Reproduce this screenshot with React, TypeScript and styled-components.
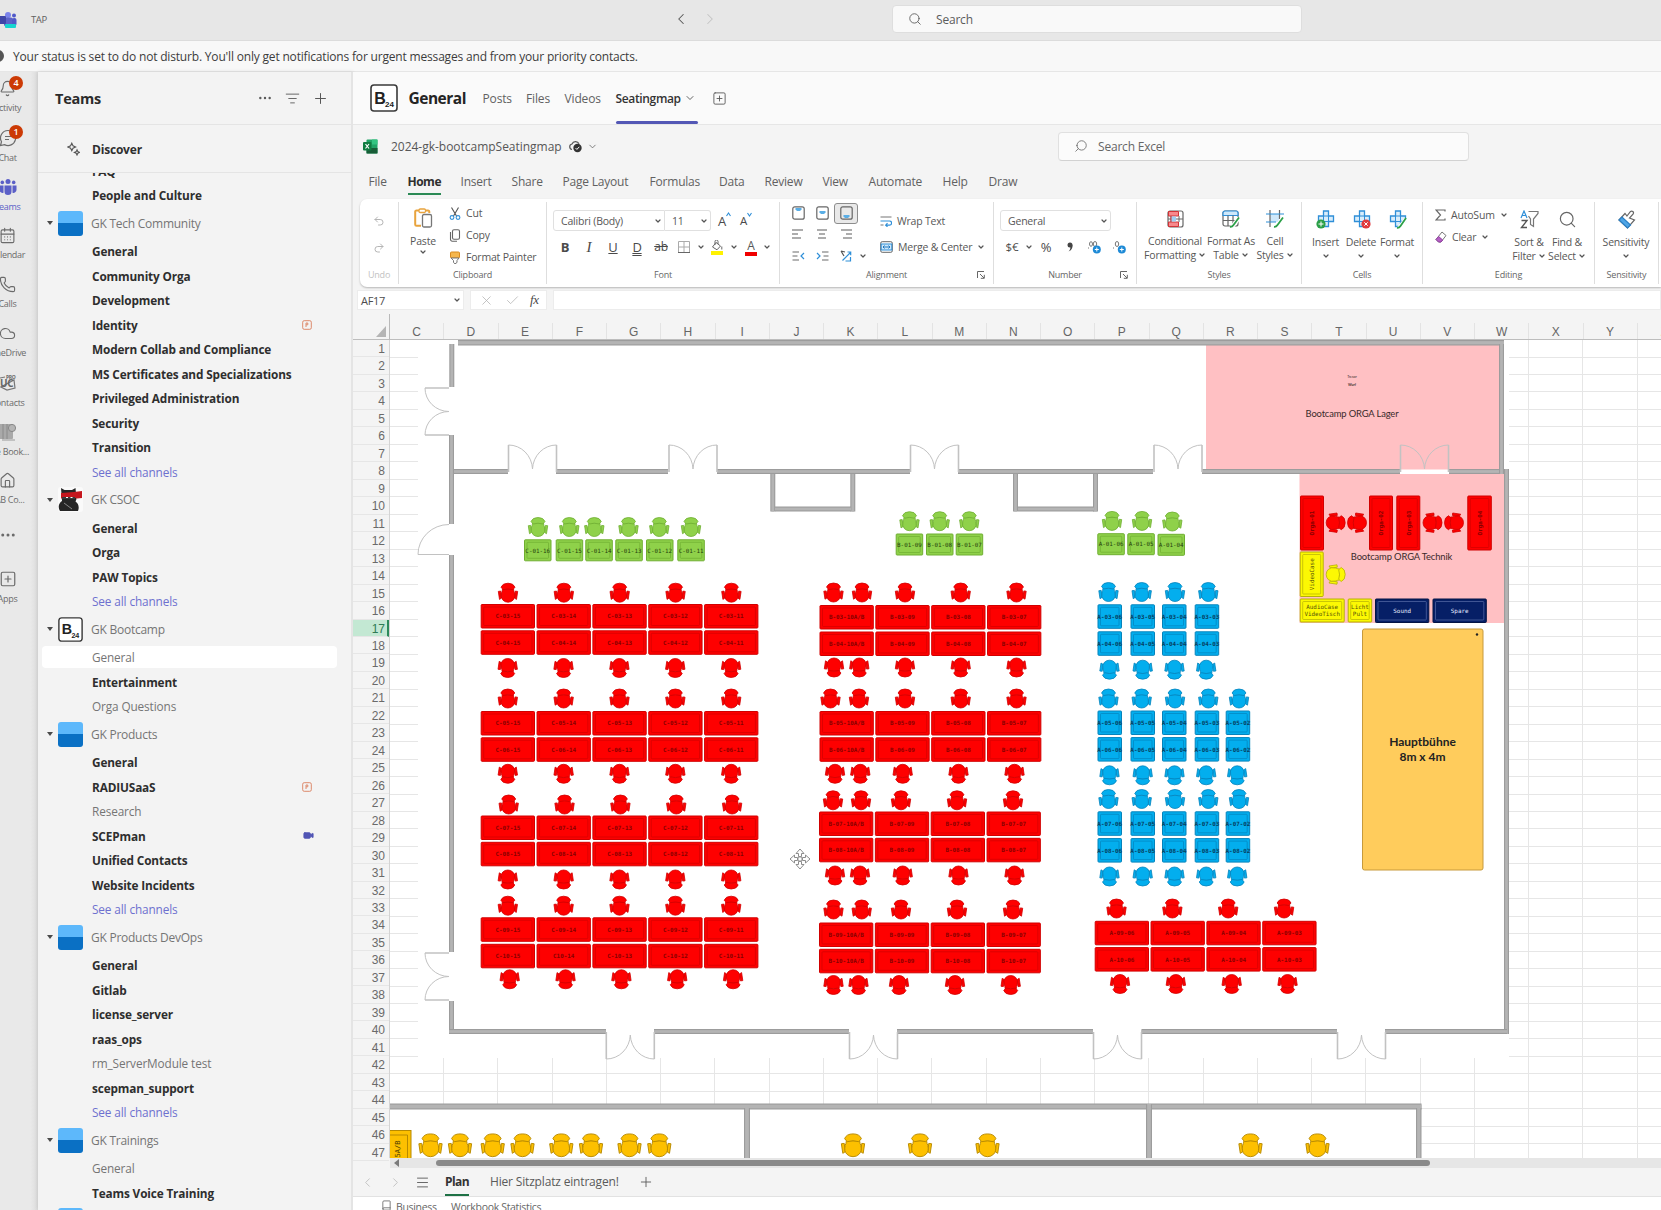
import React from "react";
import styled, { createGlobalStyle, css } from "styled-components";
import {
  Bell,
  CalendarDays,
  Phone,
  Cloud,
  House,
  SquarePlus,
  Search,
  Plus,
  ListFilter,
  Ellipsis,
  Undo2,
  Redo2,
  ChevronLeft,
  ChevronRight,
  ChevronDown,
  Check,
  X,
  Menu,
  Book,
  Video,
} from "lucide-react";

const GlobalStyle = createGlobalStyle`
  * { box-sizing: border-box; }
  html, body { margin: 0; padding: 0; }
  body {
    width: 1661px;
    height: 1210px;
    overflow: hidden;
    background: #f4f4f4;
    font-family: "Open Sans", "Noto Sans", sans-serif;
    color: #424242;
  }
  svg { display: block; flex: none; }
`;

/* ---------- shell ---------- */

const Shell = styled.div`
  width: 1661px;
  height: 1210px;
  display: flex;
  flex-direction: column;
  overflow: hidden;
  white-space: nowrap;
`;

const TitleBar = styled.header`
  flex: none;
  height: 41px;
  display: flex;
  align-items: center;
  background: #e7e7e7;
  border-bottom: 1px solid #dcdcdc;
  padding-bottom: 2px;
`;

const LogoSlot = styled.div`
  width: 31px;
  padding-top: 1px;
`;

const Tap = styled.div`
  width: 638px;
  font-size: 9.5px;
  letter-spacing: -0.4px;
  color: #616161;
`;

const NavButtons = styled.div`
  display: flex;
  gap: 11px;
  width: 223px;
  padding-left: 3px;
`;

const GlobalSearch = styled.div`
  width: 410px;
  height: 28px;
  border-radius: 4px;
  background: #f9f9f9;
  border: 1px solid #dedede;
  display: flex;
  align-items: center;
  gap: 14px;
  padding-left: 15px;
  font-size: 12px;
  letter-spacing: -0.2px;
  color: #5c5c5c;
`;

const Banner = styled.div`
  flex: none;
  height: 31px;
  display: flex;
  align-items: center;
  background: #f8f8f8;
  border-bottom: 1px solid #e6e6e6;
  font-size: 12px;
  letter-spacing: -0.18px;
  color: #3c3c3c;
`;

const BannerDot = styled.div`
  width: 12px;
  height: 12px;
  border-radius: 50%;
  background: #555;
  margin: 0 9px 0 -8px;
`;

const Body = styled.div`
  flex: 1;
  min-height: 0;
  display: flex;
`;

/* ---------- rail ---------- */

const Rail = styled.nav`
  flex: none;
  width: 38px;
  overflow: hidden;
  background: linear-gradient(90deg, #e9e9e9 80%, #dcdcdc);
`;

const RailItem = styled.div<{ $active?: boolean; $bare?: boolean }>`
  position: relative;
  width: 60px;
  margin-left: -22.5px;
  height: 49px;
  padding-top: ${(p) => (p.$bare ? 13 : 8)}px;
  display: flex;
  flex-direction: column;
  align-items: center;
  gap: 4px;
  font-size: 9px;
  line-height: 13px;
  letter-spacing: -0.3px;
  color: ${(p) => (p.$active ? "#5b5fc7" : "#6b6b6b")};
`;

const Badge = styled.span`
  position: absolute;
  left: 31.5px;
  top: 4px;
  width: 14px;
  height: 14px;
  border-radius: 50%;
  background: #cc3a05;
  color: #fff;
  font-size: 9px;
  font-weight: 600;
  line-height: 14px;
  text-align: center;
`;

/* ---------- sidebar ---------- */

const Sidebar = styled.aside`
  flex: none;
  width: 315px;
  display: flex;
  flex-direction: column;
  background: #f3f3f3;
  border-right: 2px solid #e4e4e4;
  box-shadow: 0 0 4px rgba(0, 0, 0, 0.12);
`;

const SideHeader = styled.div`
  flex: none;
  height: 53px;
  display: flex;
  align-items: center;
  padding: 0 22px 0 17px;
  border-bottom: 1px solid #e4e4e4;
  color: #555;
  gap: 12px;
`;

const SideTitle = styled.h1`
  margin: 0;
  flex: 1;
  font-size: 14.5px;
  font-weight: 700;
  letter-spacing: -0.25px;
  color: #2b2b2b;
`;

const Discover = styled.div`
  flex: none;
  height: 48px;
  display: flex;
  align-items: center;
  gap: 12px;
  padding: 1px 0 0 29px;
  border-bottom: 1px solid #e4e4e4;
  font-size: 12px;
  font-weight: 700;
  letter-spacing: -0.2px;
  color: #2f2f2f;
`;

const TeamList = styled.div`
  flex: 1;
  min-height: 0;
  overflow: hidden;
`;

const TeamListInner = styled.div`
  margin-top: -14.6px;
`;

const TeamRow = styled.div`
  height: 31.5px;
  display: flex;
  align-items: center;
  padding-left: 9px;
  font-size: 12px;
  letter-spacing: -0.25px;
  color: #757575;
`;

const Caret = styled.i`
  width: 0;
  height: 0;
  border: 3px solid transparent;
  border-top: 4px solid #4a4a4a;
  border-bottom: 0;
  margin-right: 5px;
`;

const Avatar = styled.div<{ $kind: "blue" | "cat" | "b24" }>`
  width: 25px;
  height: 25px;
  border-radius: 3px;
  margin-right: 8px;
  overflow: hidden;
  ${(p) =>
    p.$kind === "blue" &&
    css`
      background: linear-gradient(#5db8fb 48%, #0a70c4 50%);
    `}
`;

const ChannelRow = styled.div<{ $tone: "bold" | "plain" | "link"; $selected?: boolean }>`
  height: ${(p) => (p.$selected ? "22.5px" : "24.5px")};
  margin: ${(p) => (p.$selected ? "1px 14px 1px 4px" : "0 14px 0 4px")};
  border-radius: 4px;
  background: ${(p) => (p.$selected ? "#fff" : "transparent")};
  display: flex;
  align-items: center;
  justify-content: space-between;
  padding: 0 25px 0 50px;
  font-size: 11.8px;
  font-weight: ${(p) => (p.$tone === "bold" ? 700 : 400)};
  letter-spacing: ${(p) => (p.$tone === "bold" ? "-0.14px" : "-0.12px")};
  color: ${(p) => (p.$tone === "bold" ? "#2e2e2e" : p.$tone === "link" ? "#6d70cf" : "#757575")};
`;

/* ---------- channel header ---------- */

const Main = styled.main`
  flex: 1;
  min-width: 0;
  display: flex;
  flex-direction: column;
  background: #f4f4f4;
`;

const ChannelHeader = styled.div`
  flex: none;
  height: 53px;
  display: flex;
  align-items: center;
  padding-left: 16.5px;
  background: #fafafa;
  border-bottom: 1px solid #e6e6e6;
`;

const ChannelTitle = styled.h2`
  margin: 0;
  width: 75px;
  padding-left: 11px;
  margin-right: 10px;
  font-size: 15.5px;
  font-weight: 700;
  letter-spacing: -0.5px;
  color: #242424;
`;

const HeaderTab = styled.div<{ $w: number; $active?: boolean }>`
  position: relative;
  width: ${(p) => p.$w}px;
  height: 52px;
  display: flex;
  align-items: center;
  gap: 3px;
  font-size: 12px;
  font-weight: ${(p) => (p.$active ? 600 : 400)};
  letter-spacing: ${(p) => (p.$active ? "-0.35px" : "-0.15px")};
  color: ${(p) => (p.$active ? "#333" : "#616161")};
  ${(p) =>
    p.$active &&
    css`
      &::after {
        content: "";
        position: absolute;
        left: 0;
        width: 82px;
        bottom: 0;
        height: 3px;
        border-radius: 2px;
        background: #5357b5;
      }
    `}
`;

/* ---------- workbook chrome ---------- */

const FileRow = styled.div`
  flex: none;
  height: 42px;
  display: flex;
  align-items: center;
  padding-left: 10px;
  color: #565656;
`;

const FileName = styled.div`
  width: 169px;
  margin: 0 8px 0 13px;
  font-size: 12px;
  letter-spacing: -0.02px;
`;

const ExcelSearch = styled.div`
  width: 411px;
  height: 29px;
  margin-left: 460px;
  border-radius: 4px;
  background: #fbfbfb;
  border: 1px solid #e0e0e0;
  border-bottom-color: #d2d2d2;
  display: flex;
  align-items: center;
  gap: 10px;
  padding-left: 15px;
  font-size: 12px;
  letter-spacing: -0.2px;
  color: #666;
`;

const MenuTabs = styled.div`
  flex: none;
  height: 32px;
  padding: 3px 0 0 15.5px;
  display: flex;
`;

const MenuTab = styled.div<{ $w: number; $active?: boolean }>`
  width: ${(p) => p.$w}px;
  font-size: 12px;
  line-height: 24px;
  font-weight: ${(p) => (p.$active ? 700 : 400)};
  letter-spacing: ${(p) => (p.$active ? "-0.5px" : "-0.2px")};
  color: ${(p) => (p.$active ? "#2f2f2f" : "#616161")};
  span {
    display: inline-block;
    height: 25px;
    border-bottom: ${(p) => (p.$active ? "2px solid #2b8a55" : "none")};
  }
`;

const Ribbon = styled.section`
  flex: none;
  height: 88px;
  margin-left: 7px;
  background: #fff;
  border-radius: 7px 0 0 7px;
  box-shadow: 0 1px 2px rgba(0, 0, 0, 0.25);
  display: flex;
  padding: 3px 0;
`;

const Group = styled.div<{ $w: number }>`
  flex: none;
  width: ${(p) => p.$w}px;
  display: grid;
  grid-template-rows: 66px 14px;
  border-right: 1px solid #dedede;
  font-size: 10.5px;
  letter-spacing: -0.2px;
  color: #575757;
`;

const GroupBody = styled.div<{ $pad?: string; $gap?: number }>`
  display: flex;
  gap: ${(p) => p.$gap ?? 0}px;
  padding: ${(p) => p.$pad ?? "0"};
`;

const GroupLabel = styled.div<{ $dim?: boolean; $side?: number }>`
  display: grid;
  grid-template-columns: ${(p) => p.$side ?? 16}px 1fr ${(p) => p.$side ?? 16}px;
  align-items: center;
  text-align: center;
  font-size: 9px;
  line-height: 14px;
  color: ${(p) => (p.$dim ? "#c2c2c2" : "#666")};
`;

const Stack = styled.div<{ $w?: number; $gap?: number; $pad?: string; $center?: boolean }>`
  flex: none;
  width: ${(p) => (p.$w ? `${p.$w}px` : "auto")};
  display: flex;
  flex-direction: column;
  gap: ${(p) => p.$gap ?? 0}px;
  padding: ${(p) => p.$pad ?? "0"};
  align-items: ${(p) => (p.$center ? "center" : "stretch")};
`;

const Command = styled.div<{ $h?: number }>`
  height: ${(p) => p.$h ?? 23}px;
  display: flex;
  align-items: center;
  gap: 5px;
`;

const BigButton = styled.div<{ $w: number; $top?: number }>`
  flex: none;
  width: ${(p) => p.$w}px;
  display: flex;
  flex-direction: column;
  align-items: center;
  padding-top: ${(p) => p.$top ?? 8}px;
  line-height: 14px;
  svg:first-child {
    margin-bottom: 6px;
  }
`;

const Line = styled.div`
  display: flex;
  align-items: center;
  gap: 2px;
  height: 14px;
  svg:first-child {
    margin-bottom: 0;
  }
`;

const Combo = styled.div<{ $w: number; $side?: "left" | "right" }>`
  width: ${(p) => p.$w}px;
  height: 21px;
  border: 1px solid #e0e0e0;
  border-left-width: ${(p) => (p.$side === "right" ? 0 : 1)}px;
  border-radius: ${(p) => (p.$side === "left" ? "3px 0 0 3px" : p.$side === "right" ? "0 3px 3px 0" : "3px")};
  display: flex;
  align-items: center;
  justify-content: space-between;
  padding: 0 2px 0 7px;
`;

const Cells = styled.div<{ $cols: string; $h: number }>`
  display: grid;
  grid-template-columns: ${(p) => p.$cols};
  height: ${(p) => p.$h}px;
  align-items: center;
  justify-items: center;
`;

const Glyph = styled.span<{ $bold?: boolean; $italic?: boolean; $deco?: string; $size?: number; $h?: number }>`
  font-size: ${(p) => p.$size ?? 13}px;
  font-weight: ${(p) => (p.$bold ? 700 : 400)};
  font-style: ${(p) => (p.$italic ? "italic" : "normal")};
  font-family: ${(p) => (p.$italic ? '"Liberation Serif", serif' : "inherit")};
  text-decoration: ${(p) => p.$deco ?? "none"};
  line-height: ${(p) => p.$h ?? 16}px;
  height: 16px;
  color: #4a4a4a;
`;

const SizeGlyph = styled.span<{ $size: number }>`
  display: flex;
  align-items: flex-start;
  font-size: ${(p) => p.$size}px;
  line-height: 18px;
  color: #4a4a4a;
`;

const Underbar = styled.span<{ $color: string }>`
  border-bottom: 4px solid ${(p) => p.$color};
  width: 12px;
  height: 17px;
  display: flex;
  justify-content: center;
  font-size: 12px;
  line-height: 14px;
`;

const Pressed = styled.span`
  width: 24px;
  height: 21px;
  border: 1px solid #8d8d8d;
  border-radius: 3px;
  background: #e9e9e9;
  display: grid;
  place-items: center;
`;

const FormulaRow = styled.div`
  flex: none;
  height: 27px;
  padding: 3px 0 4px 4px;
  display: flex;
  gap: 6px;
`;

const FormulaBox = styled.div<{ $w?: number; $spread?: boolean }>`
  ${(p) => (p.$w ? `width: ${p.$w}px;` : "flex: 1;")}
  background: #fff;
  border: 1px solid #ececec;
  display: flex;
  align-items: center;
  justify-content: ${(p) => (p.$spread ? "space-between" : "space-around")};
  padding: 0 2px 0 3px;
  font-size: 11px;
  letter-spacing: -0.3px;
  color: #4d4d4d;
`;

/* ---------- sheet ---------- */

const SheetArea = styled.section`
  flex: none;
  height: 844px;
  display: grid;
  grid-template-columns: 37px 1fr;
  grid-template-rows: 26px 818px;
`;

const Corner = styled.div`
  display: flex;
  align-items: flex-end;
  justify-content: flex-end;
  padding: 0 3px 2px 0;
  border-right: 1px solid #b9b9b9;
  border-bottom: 1px solid #bdbdbd;
`;

const Triangle = styled.i`
  width: 0;
  height: 0;
  border-left: 10px solid transparent;
  border-bottom: 11px solid #b5b5b5;
`;

const ColumnHeads = styled.div`
  display: flex;
  overflow: hidden;
  padding-top: 9px;
  border-bottom: 1px solid #bdbdbd;
`;

const ColumnHead = styled.div`
  flex: none;
  width: 54.25px;
  border-right: 1px solid #e3e3e3;
  text-align: center;
  font: 12px/19px "Liberation Sans", Arial, sans-serif;
  color: #666;
`;

const RowHeads = styled.div`
  border-right: 1px solid #d4d4d4;
`;

const RowHead = styled.div<{ $on?: boolean }>`
  height: 17.48px;
  padding-right: ${(p) => (p.$on ? 2 : 4)}px;
  text-align: right;
  font: 12px/19px "Liberation Sans", Arial, sans-serif;
  border-bottom: 1px solid #e6e6e6;
  color: ${(p) => (p.$on ? "#2f7a55" : "#6a6a6a")};
  background: ${(p) => (p.$on ? "#c3e8d3" : "transparent")};
  border-right: ${(p) => (p.$on ? "2px solid #2c8a5b" : "none")};
`;

const Canvas = styled.div`
  background: #fff;
  overflow: hidden;
`;

const ScrollRow = styled.div`
  flex: none;
  height: 10px;
  margin-left: 37px;
  background: #e6e6e6;
  display: flex;
  align-items: center;
  padding-left: 4px;
`;

const ScrollArrow = styled.i`
  width: 0;
  height: 0;
  border: 4px solid transparent;
  border-right: 5px solid #7a7a7a;
  border-left: 0;
  margin-right: 36.5px;
`;

const ScrollThumb = styled.div`
  width: 994px;
  height: 6px;
  border-radius: 3px;
  background: #8a8a8a;
`;

const SheetTabs = styled.div`
  flex: none;
  height: 29px;
  display: flex;
  align-items: center;
  padding-left: 7px;
  border-bottom: 1px solid #e2e2e2;
  color: #5f5f5f;
`;

const SheetTab = styled.div<{ $active?: boolean; $w: number }>`
  width: ${(p) => p.$w}px;
  height: 28px;
  font-size: 12px;
  line-height: 27px;
  font-weight: ${(p) => (p.$active ? 700 : 400)};
  letter-spacing: ${(p) => (p.$active ? "-0.6px" : "-0.17px")};
  color: ${(p) => (p.$active ? "#333" : "#5a5a5a")};
  border-bottom: ${(p) => (p.$active ? "2px solid #1e7145" : "none")};
`;

const Status = styled.div`
  flex: 1;
  background: #fff;
  display: flex;
  gap: 4px;
  padding: 3px 0 0 28px;
  font-size: 10.5px;
  line-height: 15px;
  letter-spacing: -0.32px;
  color: #666;
`;

const StatusItem = styled.span<{ $w: number }>`
  width: ${(p) => p.$w}px;
`;

const PlanText = styled.text<{ $size: number; $bold?: boolean; $fill?: string; $mono?: boolean; $track?: number }>`
  font-family: ${(p) => (p.$mono ? '"DejaVu Sans Mono", monospace' : 'Lato, "Open Sans", sans-serif')};
  font-size: ${(p) => p.$size}px;
  font-weight: ${(p) => (p.$bold ? 700 : 400)};
  letter-spacing: ${(p) => p.$track ?? 0}px;
  fill: ${(p) => p.$fill ?? "#3a2a2a"};
  text-anchor: middle;
`;

/* ---------- small icons ---------- */

const Chev = ({ s = 8, c = "#555" }: { s?: number; c?: string }) => (
  <ChevronDown size={s} color={c} strokeWidth={3.6} />
);

const TeamsLogo = () => (
  <svg width="17" height="18" viewBox="0 0 17 18">
    <circle cx="8" cy="4" r="3" fill="#7b83eb" />
    <circle cx="14" cy="4.5" r="2" fill="#5059c9" />
    <rect x="4" y="6.5" width="9" height="9" rx="2" fill="#5b62c9" />
    <rect x="12" y="7" width="4.5" height="8" rx="2" fill="#5059c9" />
    <rect x="-2" y="5" width="8" height="8" rx="1" fill="#3f46a8" />
    <rect x="5" y="13" width="11" height="4" rx="1" fill="#17d5d0" />
  </svg>
);

const ChatGlyph = () => (
  <svg width="18" height="18" viewBox="0 0 18 18" fill="none" stroke="#6b6b6b" strokeWidth="1.2">
    <path d="M9 1.500a7.500 7.500 0 1 1-3.500 14.100L1.500 16.500l1-3.800A7.500 7.500 0 0 1 9 1.500z" />
    <path d="M6 7.500h6M6 10.500h4" />
  </svg>
);

const TeamsGlyph = () => (
  <svg width="18" height="18" viewBox="0 0 18 18" fill="#5b5fc7">
    <circle cx="9" cy="3.6" r="2.5" />
    <circle cx="3.3" cy="4.4" r="1.8" />
    <circle cx="14.7" cy="4.4" r="1.8" />
    <path d="M5.5 7.5h7v6a3.5 3.5 0 0 1-7 0z" />
    <path d="M.5 7.5h4v7.2A3 3 0 0 1 .5 12zM17.5 7.5h-4v7.2a3 3 0 0 0 4-2.7z" />
  </svg>
);

const ContactsGlyph = () => (
  <svg width="20" height="18" viewBox="0 0 20 18" fill="none" stroke="#777" strokeWidth="1.2">
    <path d="M2 4l5-1M16 6l1 8-8 2-6-3z" />
    <text x="2" y="13" fontSize="10" fontWeight="700" fill="#666" stroke="none" fontFamily="Open Sans">UC</text>
    <text x="8" y="4.500" fontSize="5" fontWeight="700" fill="#666" stroke="none" fontFamily="Open Sans">PRO</text>
  </svg>
);

const BookGlyph = () => (
  <svg width="18" height="18" viewBox="0 0 18 18">
    <rect x="0" y="1" width="14" height="15" rx="1" fill="#a9a9a9" />
    <path d="M4 1v15M8 1v15" stroke="#8a8a8a" />
    <circle cx="13" cy="5" r="3.6" fill="#b5b5b5" stroke="#888" />
    <path d="M3 17h13" stroke="#999" />
  </svg>
);

const B24 = ({ size }: { size: number }) => (
  <svg width={size} height={size} viewBox="0 0 28 28">
    <rect x="1" y="1" width="26" height="26" rx="3" fill="#fff" stroke="#3a3a3a" strokeWidth="1.6" />
    <text x="4.2" y="19.5" fontSize="16" fontWeight="700" fill="#222" fontFamily="Liberation Sans, sans-serif">B</text>
    <text x="15" y="23" fontSize="8" fontWeight="700" fill="#222" fontFamily="Liberation Sans, sans-serif">24</text>
  </svg>
);

const Cat = () => (
  <svg width="25" height="25" viewBox="0 0 25 25">
    <rect width="25" height="25" fill="#fafafa" />
    <path d="M3 1l3.500 2h7.500l3.500-2 1 11-1 2.500c3 2 4 5.500 2.500 9.500H2C-.5 20 1 16 4 14z" fill="#262626" />
    <path d="M3 6l13-1 8-1v7l-5 .5-3-1-13 1z" fill="#c5161d" />
    <path d="M4 10h13v2H4z" fill="#3a3a3a" />
    <path d="M8 10.500h2M12.500 10.500h2" stroke="#fff" strokeWidth="1.200" />
    <path d="M6 16l8 6" stroke="#888" />
  </svg>
);

const PriorityTag = () => (
  <svg width="10" height="10" viewBox="0 0 10 10" fill="none" stroke="#dd8a6c">
    <rect x=".7" y=".7" width="8.6" height="8.6" rx="1.5" />
    <path d="M4 7V3h1.8v1.8H4" />
  </svg>
);

const Sparkle = () => (
  <svg width="13" height="14" viewBox="0 0 13 14" fill="none" stroke="#555" strokeWidth="1.1">
    <path d="M4.800 1.200l1.200 2.600 2.600 1.200L6 6.200 4.800 8.800 3.600 6.200 1 5l2.600-1.200z" />
    <path d="M10 7.800l.8 1.800 1.800.8-1.800.8-.8 1.800-.8-1.800-1.800-.8 1.800-.8z" />
  </svg>
);

const ExcelLogo = () => (
  <svg width="15" height="15" viewBox="0 0 15 15">
    <rect x="3.500" y=".5" width="11" height="14" rx="1" fill="#21a366" />
    <rect x="9" y=".5" width="5.500" height="5" fill="#33c481" />
    <rect x="3.500" y="9" width="11" height="5.500" fill="#185c37" />
    <rect x="0" y="3" width="8.500" height="8.500" rx="1" fill="#107c41" />
    <path d="M2.500 5l3.500 4.500M6 5L2.500 9.500" stroke="#fff" strokeWidth="1.200" />
  </svg>
);

const CloudSaved = () => (
  <svg width="14" height="13" viewBox="0 0 14 13">
    <path d="M4 9.500a2.800 2.800 0 0 1 0-5.500 3.800 3.800 0 0 1 7-.2" fill="none" stroke="#555" strokeWidth="1.200" />
    <circle cx="9.500" cy="8" r="4.200" fill="#333" />
    <path d="M7.600 8.100l1.300 1.300 2.400-2.600" fill="none" stroke="#fff" />
  </svg>
);

const PasteIcon = () => (
  <svg width="19" height="20" viewBox="0 0 19 20" fill="none">
    <path d="M5 2.500H2.500A1.300 1.300 0 0 0 1.200 4v12.500a1.300 1.300 0 0 0 1.300 1.300H7M11.500 2.500h2.500A1.300 1.300 0 0 1 15.300 4v1" stroke="#e8a33d" strokeWidth="2" />
    <rect x="5" y="1" width="6.500" height="3.500" rx="1.200" fill="#fff" stroke="#e8a33d" strokeWidth="1.300" />
    <rect x="8.500" y="6.500" width="9" height="12.500" rx="1.500" fill="#fff" stroke="#777" strokeWidth="1.300" />
  </svg>
);

const CutIcon = () => (
  <svg width="12" height="13" viewBox="0 0 12 13" fill="none" strokeWidth="1.100">
    <path d="M2.500 .5l5 8.500M9.500 .5l-5 8.500" stroke="#555" />
    <circle cx="3" cy="10.500" r="1.900" stroke="#2f8fd8" />
    <circle cx="9" cy="10.500" r="1.900" stroke="#2f8fd8" />
  </svg>
);

const CopyIcon = () => (
  <svg width="12" height="13" viewBox="0 0 12 13" fill="none" stroke="#666" strokeWidth="1.100">
    <rect x="3.500" y=".8" width="7" height="9.500" rx="1.500" />
    <path d="M1.500 3v7.500a1.700 1.700 0 0 0 1.700 1.700H8" />
  </svg>
);

const PainterIcon = () => (
  <svg width="12" height="13" viewBox="0 0 12 13">
    <rect x="1.500" y="1" width="9" height="6" rx="1" fill="#f5b64c" stroke="#d98a1f" />
    <path d="M2 7h8L8 9.500v2L6 12.800 4.500 11.500v-2z" fill="#fff" stroke="#777" />
  </svg>
);

const SizeMark = ({ down }: { down?: boolean }) => (
  <svg width="5" height="5" viewBox="0 0 5 5" fill="none" stroke="#2f8fd8" strokeWidth="1.100">
    <path d={down ? "M.5 1l2 3 2-3" : "M.5 4l2-3 2 3"} />
  </svg>
);

const BorderIcon = () => (
  <svg width="12" height="12" viewBox="0 0 12 12" stroke="#aaa" fill="none">
    <path d="M.5.5h11v11H.5zM6 .5v11M.5 6h11" />
    <path d="M0 11.500h12" stroke="#666" />
  </svg>
);

const BucketIcon = () => (
  <svg width="12" height="15" viewBox="0 0 12 15" fill="none" stroke="#666">
    <path d="M5 2.500L9.500 6 6 9.800 1.500 7z" />
    <path d="M4 5V1.500a1.500 1.500 0 0 1 3 0V4M10.800 6.500v3" />
    <rect x="0" y="11" width="12" height="4" fill="#fff200" stroke="none" />
  </svg>
);

const VAlign = ({ at }: { at: number }) => (
  <svg width="13" height="14" viewBox="0 0 13 14" fill="none">
    <rect x=".8" y=".8" width="11.400" height="12.400" rx="2" stroke="#666" strokeWidth="1.200" />
    <path d={`M3.500 ${at}h6v1.500l-1.500 1.500H5L3.500 ${at + 1.5}z`} fill="#5aaee6" />
  </svg>
);

const HAlign = ({ xs }: { xs: number[][] }) => (
  <svg width="12" height="10" viewBox="0 0 12 10" stroke="#6b6b6b" strokeWidth="1.100">
    {xs.map(([a, b], i) => (
      <path key={i} d={`M${a} ${1 + i * 4}H${b}`} />
    ))}
  </svg>
);

const IndentIcon = ({ flip }: { flip?: boolean }) => (
  <svg width="13" height="10" viewBox="0 0 13 10" fill="none" strokeWidth="1.200">
    <g transform={flip ? "translate(13 0) scale(-1 1)" : undefined}>
      <path d="M.5 1h6.500M.5 5h5M.5 9h6.500" stroke="#6b6b6b" />
      <path d="M12 2L9 5l3 3" stroke="#2f8fd8" />
    </g>
  </svg>
);

const OrientIcon = () => (
  <svg width="12" height="12" viewBox="0 0 12 12" fill="none" strokeWidth="1.200">
    <path d="M1 1l3 5M1 1l4 1" stroke="#555" />
    <path d="M2.500 10.500l8-8M7.500 2h3.200v3.200" stroke="#2f8fd8" />
    <path d="M5.500 11h5v-4" stroke="#2f8fd8" />
  </svg>
);

const WrapIcon = () => (
  <svg width="12" height="12" viewBox="0 0 12 12" fill="none" strokeWidth="1.200">
    <path d="M.5 2h11M.5 10h3" stroke="#777" />
    <path d="M.5 6h9a2 2 0 0 1 0 4.200H6M7.500 8.200L5.700 10.200l1.800 1.600" stroke="#2f8fd8" />
  </svg>
);

const MergeIcon = () => (
  <svg width="13" height="12" viewBox="0 0 13 12" fill="none">
    <rect x=".7" y=".7" width="11.600" height="10.600" rx="1.500" stroke="#666" />
    <rect x="1.200" y="3" width="10.600" height="6" fill="#cfe8fa" stroke="#2f8fd8" />
    <path d="M3 6h7M4.500 4.500L3 6l1.500 1.500M8.500 4.500L10 6 8.500 7.500" stroke="#1f78c1" />
  </svg>
);

const Launcher = () => (
  <svg width="8" height="8" viewBox="0 0 8 8" fill="none" stroke="#666">
    <path d="M.5 7V.5H7M3 3l4 4M7.300 3.800v3.500H3.800" />
  </svg>
);

const CommaIcon = () => (
  <svg width="6" height="10" viewBox="0 0 6 10" fill="#444">
    <circle cx="3" cy="3" r="2.500" />
    <path d="M5.500 3c.2 3-1 5.500-4 6.500 1.500-1.500 2-3 1.800-4.500z" />
  </svg>
);

const DecimalIcon = ({ more }: { more?: boolean }) => (
  <svg width="13" height="14" viewBox="0 0 13 14">
    <g fill="none" stroke="#777">
      {more && <ellipse cx="3" cy="4" rx="1.500" ry="2.300" />}
      <ellipse cx={more ? 7 : 4} cy="4" rx="1.700" ry="2.500" />
      <path d="M.5 7.500v1" />
    </g>
    <circle cx="8.800" cy="9.500" r="4" fill="#1e8ad6" />
    <path d="M6.800 9.500h4M8.800 7.500v4" stroke="#fff" />
  </svg>
);

const CondIcon = () => (
  <svg width="17" height="18" viewBox="0 0 17 18" fill="none">
    <rect x="1" y="1" width="15" height="16" rx="2" fill="#fff" stroke="#666" strokeWidth="1.200" />
    <path d="M1.500 1.500h10v4.500h-10zM1.500 12h10v4.500h-10z" fill="#f7898c" stroke="#d13438" />
    <path d="M4 6v6M12 6v6M1 9h15" stroke="#666" />
    <rect x="4" y="6.500" width="5" height="5" fill="#9fd0f3" />
    <path d="M4 6v6" stroke="#d13438" />
  </svg>
);

const TableIcon = ({ cells }: { cells?: boolean }) => (
  <svg width="18" height="18" viewBox="0 0 18 18" fill="none" strokeWidth="1.200">
    {cells ? (
      <>
        <rect x="4" y="4" width="9" height="8" fill="#cfe8fa" />
        <path d="M4 0v17M13.500 0v9" stroke="#666" />
        <path d="M0 4h18M0 12h10" stroke="#2f8fd8" />
      </>
    ) : (
      <>
        <rect x="1" y="1" width="15" height="15" rx="2" stroke="#666" />
        <path d="M1 5.500V3a2 2 0 0 1 2-2h11a2 2 0 0 1 2 2v2.500z" fill="#cfe8fa" stroke="#2f8fd8" />
        <path d="M6 5.500V16M11 5.500V16M1 10.500h15" stroke="#666" />
      </>
    )}
    <path d="M17 8l-7 9" stroke="#fff" strokeWidth="4" />
    <path d="M17 7.500l-5.500 7.500c-1 1.500-2 2-3.500 1.800" stroke="#2ca048" strokeWidth="1.800" />
  </svg>
);

const CellIcon = ({ kind }: { kind: "insert" | "delete" | "format" }) => (
  <svg width="19" height="19" viewBox="0 0 19 19" fill="none">
    <path
      d="M7.500 1h5v5h5v5.500h-5v5h-5v-5h-5V6h5z"
      fill="#d9edfb"
      stroke="#2f8fd8"
      strokeWidth="1.300"
    />
    <path d="M7.500 6h5v5.500h-5z" stroke="#2f8fd8" />
    {kind === "insert" && (
      <>
        <circle cx="5" cy="14" r="4.600" fill="#2ca048" />
        <path d="M5 11.500v5M2.500 14h5" stroke="#fff" />
      </>
    )}
    {kind === "delete" && (
      <>
        <circle cx="14" cy="14" r="4.600" fill="#e03a3e" />
        <path d="M12.300 12.300l3.400 3.400M15.700 12.300l-3.400 3.400" stroke="#fff" />
      </>
    )}
    {kind === "format" && (
      <>
        <path d="M18 9l-7 9" stroke="#fff" strokeWidth="4" />
        <path d="M18 8l-5.500 8c-1 1.500-2 2-3.500 1.800" stroke="#2ca048" strokeWidth="1.800" />
      </>
    )}
  </svg>
);

const SigmaIcon = () => (
  <svg width="11" height="12" viewBox="0 0 11 12" fill="none" stroke="#666" strokeWidth="1.200">
    <path d="M10 2.500V1H1l4.500 5L1 11h9V9.500" />
  </svg>
);

const EraserIcon = () => (
  <svg width="12" height="12" viewBox="0 0 12 12">
    <path d="M7 1l4 3.500L6 11H3.500L1 8.500z" fill="#fff" stroke="#777" />
    <path d="M3.600 5.500L7.700 9 6 11H3.500L1 8.500z" fill="#b65fc4" stroke="#8f3fa0" />
  </svg>
);

const SortIcon = () => (
  <svg width="19" height="19" viewBox="0 0 19 19" fill="none" strokeWidth="1.200">
    <path d="M1 8L4 1l3 7M2 5.500h4" stroke="#2f8fd8" />
    <path d="M1.500 10.500H7L1.500 17.500H7" stroke="#555" strokeWidth="1.400" />
    <path d="M8.500 1.500H18v2L13.500 9v7.500l-3-2V9L8.500 6" stroke="#777" />
  </svg>
);

const SensIcon = () => (
  <svg width="19" height="19" viewBox="0 0 19 19" fill="none" strokeWidth="1.200">
    <path d="M10 6l3.500-4.500a1.800 1.800 0 0 1 2.700 2.300L12.500 8l5 2-7 8L2 10l6-6.500z" stroke="#666" />
    <path d="M2 10l3-3 8.500 8-3 3z" fill="#4ea5e6" stroke="#2b7fc4" />
  </svg>
);

/* ---------- floor plan ---------- */

type Tone = "red" | "green" | "blue" | "yellow" | "navy" | "amber";

const TONES: Record<Tone, { fill: string; edge: string; ink: string }> = {
  red: { fill: "#fe0000", edge: "#d00000", ink: "#860000" },
  green: { fill: "#8fd14a", edge: "#6fae31", ink: "#26420c" },
  blue: { fill: "#03aeee", edge: "#0583bb", ink: "#06405f" },
  yellow: { fill: "#fcf803", edge: "#b5b007", ink: "#57540a" },
  navy: { fill: "#061f66", edge: "#031444", ink: "#e6ecff" },
  amber: { fill: "#fdc000", edge: "#b88a00", ink: "#4c3a00" },
};

function Chair({ x, y, tone, turn = 0, scale = 1 }: { x: number; y: number; tone: Tone; turn?: number; scale?: number }) {
  const t = TONES[tone];
  return (
    <g transform={`translate(${x} ${y}) rotate(${turn}) scale(${scale})`} fill={t.fill} stroke={t.edge} strokeWidth={0.8}>
      <path d="M-9.700-1.300l2.400-.3.800 7-2 1.300zM9.700-1.300l-2.400-.3-.8 7 2 1.300z" />
      <path d="M-5.500-3.800Q-5.800-1-6.500 0q-1.200 5 1.500 7.500 2 2 5 2t5-2Q7.700 5 6.500 0q-.7-1-1-3.800z" />
      <path d="M-7-5.500Q-5.500-9.500 0-9.500T7-5.500L4.800-3Q0-4.600-4.800-3z" />
    </g>
  );
}

function Desk({ x, y, w, h, tone, lines = [], turn = 0, size = 5.9 }: {
  x: number; y: number; w: number; h: number; tone: Tone; lines?: string[]; turn?: number; size?: number;
}) {
  const t = TONES[tone];
  const cx = x + w / 2;
  const cy = y + h / 2;
  return (
    <g>
      <rect x={x + 0.5} y={y + 0.5} width={w - 1} height={h - 1} rx={0.8} fill={t.fill} stroke={t.edge} strokeWidth={1} />
      <rect x={x + 3} y={y + 3} width={w - 6} height={h - 6} rx={0.8} fill="none" stroke={tone === "navy" ? "#5a6da8" : t.edge} strokeWidth={0.7} />
      {lines.map((l, i) => (
        <PlanText
          key={i}
          $mono
          $size={size}
          $fill={t.ink}
          $bold={tone === "red" || tone === "blue"}
          transform={`translate(${cx} ${cy}) rotate(${turn})`}
          x={0}
          y={2.2 + (i - (lines.length - 1) / 2) * 7.5}
        >
          {l}
        </PlanText>
      ))}
    </g>
  );
}

const pad = (n: number) => String(n).padStart(2, "0");

interface Block {
  letter: string;
  first: number;
  seats: string[];
  xs: number[];
  w: number;
  y: number;
  gap: number;
  tone: Tone;
  top: number[];
  topY: number;
  bottom: number[];
  bottomY: number;
}

const run = (start: number, n: number, step = 55.85) => Array.from({ length: n }, (_, i) => start + i * step);

const C_SEATS = ["15", "14", "13", "12", "11"];
const B_SEATS = ["10A/B", "09", "08", "07"];
const A_SEATS = ["06", "05", "04", "03", "02"];
const A_X = [1097.5, 1130.5, 1162, 1194.7, 1225.7];
const A_TOP = [1108.5, 1141.7, 1175, 1208.3, 1239];
const A_BOTTOM = [1109.5, 1142.7, 1174.5, 1206.2, 1237.2];

const BLOCKS: Block[] = [
  { letter: "C", first: 3, seats: C_SEATS, xs: run(480.7, 5), w: 54.3, y: 604, gap: 26.3, tone: "red", top: run(508, 5), topY: 592.7, bottom: run(507.7, 5), bottomY: 668 },
  { letter: "C", first: 5, seats: C_SEATS, xs: run(480.7, 5), w: 54.3, y: 711, gap: 26.3, tone: "red", top: run(507.8, 5), topY: 698.5, bottom: run(507.8, 5), bottomY: 773.8 },
  { letter: "C", first: 7, seats: C_SEATS, xs: run(480.7, 5), w: 54.3, y: 815.5, gap: 26.3, tone: "red", top: run(508.7, 5), topY: 804.5, bottom: run(507.8, 5), bottomY: 879.5 },
  { letter: "C", first: 9, seats: C_SEATS, xs: run(480.7, 5), w: 54.3, y: 917.3, gap: 26.5, tone: "red", top: run(507.8, 5), topY: 905.7, bottom: run(509.7, 5), bottomY: 979.3 },
  { letter: "B", first: 3, seats: B_SEATS, xs: run(819.5, 4), w: 54.3, y: 605, gap: 26.5, tone: "red", top: [833.5, 862, 905, 960.7, 1016.5], topY: 592.5, bottom: [834, 859.3, 905, 960.7, 1016.5], bottomY: 667.5 },
  { letter: "B", first: 5, seats: B_SEATS, xs: run(819.5, 4), w: 54.3, y: 711, gap: 26.3, tone: "red", top: [830.5, 859, 905, 960.7, 1016.5], topY: 698.5, bottom: [835, 860.3, 902.7, 958.5, 1014.5], bottomY: 773.8 },
  { letter: "B", first: 7, seats: B_SEATS, xs: run(819, 4), w: 54.3, y: 811.5, gap: 26.3, tone: "red", top: [833, 861, 901, 957, 1013], topY: 800.3, bottom: [835, 860, 902.7, 958.5, 1014.5], bottomY: 875.5 },
  { letter: "B", first: 9, seats: B_SEATS, xs: run(819, 4), w: 54.3, y: 922.5, gap: 26.3, tone: "red", top: [833.5, 861.7, 901, 957, 1013], topY: 909.5, bottom: [833.5, 858.5, 899, 955, 1010.7], bottomY: 985 },
  { letter: "A", first: 3, seats: A_SEATS.slice(0, 4), xs: A_X.slice(0, 4), w: 24.5, y: 604.3, gap: 27, tone: "blue", top: A_TOP.slice(0, 4), topY: 592, bottom: A_BOTTOM.slice(0, 4), bottomY: 669.7 },
  { letter: "A", first: 5, seats: A_SEATS, xs: A_X, w: 24.5, y: 710.5, gap: 26.6, tone: "blue", top: A_TOP, topY: 698.5, bottom: A_BOTTOM, bottomY: 775.3 },
  { letter: "A", first: 7, seats: A_SEATS, xs: A_X, w: 24.5, y: 811.3, gap: 26.8, tone: "blue", top: A_TOP, topY: 799, bottom: A_BOTTOM, bottomY: 876.5 },
  { letter: "A", first: 9, seats: A_SEATS.slice(0, 4), xs: run(1094.7, 4), w: 54.3, y: 920.8, gap: 26.3, tone: "red", top: run(1116.5, 4), topY: 908.5, bottom: run(1120, 4), bottomY: 984 },
];

const SINGLES: { label: string; x: number; chair: number; y: number }[] = [
  ...[["C-01-16", 524, 538], ["C-01-15", 555.7, 569.3], ["C-01-14", 585.3, 594.3], ["C-01-13", 615.3, 628.5], ["C-01-12", 646, 659.3], ["C-01-11", 677.3, 691]].map(
    ([l, x, c]) => ({ label: l as string, x: x as number, chair: c as number, y: 539.3 }),
  ),
  ...[["B-01-09", 895.7, 909.5], ["B-01-08", 926, 939.7], ["B-01-07", 955.7, 969.3]].map(([l, x, c]) => ({
    label: l as string, x: x as number, chair: c as number, y: 533.5,
  })),
  { label: "A-01-06", x: 1097.3, chair: 1112, y: 533.2 },
  { label: "A-01-05", x: 1127.3, chair: 1142, y: 533.2 },
  { label: "A-01-04", x: 1157.5, chair: 1172.3, y: 533.8 },
];

const WALLS: [number, number, number, number][] = [
  [458, 340, 1046, 5.5],
  [449.3, 344, 5, 43],
  [449, 435, 5, 89],
  [449, 555, 5, 397],
  [449, 1001, 5, 33],
  [454, 469, 54, 5],
  [556, 469, 112, 5],
  [717, 469, 193, 5],
  [958, 469, 195, 5],
  [1202, 469, 198, 5],
  [1448, 469, 52, 5],
  [1499, 344, 5, 130],
  [1504, 469, 5, 565],
  [770.3, 474, 5, 37.5],
  [850.3, 474, 5, 37.5],
  [775, 506.500, 76, 5],
  [1013, 474, 5, 37.5],
  [1093, 474, 5, 37.5],
  [1018, 506.500, 76, 5],
  [449, 1029, 157, 5],
  [654, 1029, 195, 5],
  [897, 1029, 196, 5],
  [1141.500, 1029, 195.500, 5],
  [1385, 1029, 122, 5],
  [390, 1103.500, 1031.500, 6],
  [744, 1108, 6, 50],
  [1146, 1104, 6, 54],
  [1416, 1108, 5.500, 50],
];

const DoorUp = ({ x }: { x: number }) => (
  <g>
    <path d={`M${x} 472v-27M${x + 48} 472v-27`} strokeWidth="1.600" />
    <path d={`M${x} 445a24 25 0 0 1 24 24a24 25 0 0 1 24-24`} />
  </g>
);

const DoorDown = ({ x }: { x: number }) => (
  <g>
    <path d={`M${x} 1032v27M${x + 48} 1032v27`} strokeWidth="1.600" />
    <path d={`M${x} 1059a24 25 0 0 0 24-24a24 25 0 0 0 24 24`} />
  </g>
);

const DoorLeft = ({ y }: { y: number }) => (
  <g>
    <path d={`M449 ${y}h-24M449 ${y + 47}h-24`} strokeWidth="1.300" />
    <path d={`M425 ${y}a24 23.500 0 0 0 24 23.500a24 23.500 0 0 0-24 23.500`} />
  </g>
);

function FloorPlan() {
  return (
    <svg width="1271" height="818" viewBox="390 340 1271 818">
      <g stroke="#e6e6e6" strokeWidth="1">
        {Array.from({ length: 23 }, (_, i) => {
          const x = Math.round(444 + i * 54.25) - 0.5;
          return <path key={i} d={`M${x} 340V1158`} />;
        })}
        {Array.from({ length: 46 }, (_, i) => {
          const y = Math.round(357.5 + i * 17.48) - 0.5;
          return <path key={i} d={`M390 ${y}H1661`} />;
        })}
      </g>
      <rect x="418" y="340" width="1091" height="718" fill="#fff" />
      <rect x="390" y="1104" width="1031" height="54" fill="#fff" />

      <rect x="1206" y="345" width="294" height="125" fill="#ffc0c3" />
      <rect x="1299.500" y="473" width="205" height="150" fill="#ffc0c3" />

      {WALLS.map(([x, y, w, h], i) => (
        <g key={i}>
          <rect x={x} y={y} width={w} height={h} fill="#9c9c9c" />
          {w > h ? (
            <rect x={x} y={y + 1.1} width={w} height={h - 2.2} fill="#b4b4b4" />
          ) : (
            <rect x={x + 1.1} y={y} width={w - 2.2} height={h} fill="#b4b4b4" />
          )}
        </g>
      ))}
      <rect x="1400" y="469.500" width="49" height="4.500" fill="#fff" />

      <g fill="none" stroke="#c2c2c2" strokeWidth="1">
        {[508.5, 669, 910.5, 1154, 1400.5].map((x) => <DoorUp key={x} x={x} />)}
        {[606.3, 849.5, 1093.5, 1337.5].map((x) => <DoorDown key={x} x={x} />)}
        <DoorLeft y={388} />
        <DoorLeft y={953} />
        <path d="M449 554.500h-31a31 30 0 0 1 31-30" />
      </g>

      <PlanText x={1352} y={417.3} $size={9.4} $track={-0.14}>Bootcamp ORGA Lager</PlanText>
      <PlanText x={1352} y={377.5} $size={3.5}>Tresor</PlanText>
      <PlanText x={1352} y={385.5} $size={3.5} $bold>Wurf</PlanText>
      <PlanText x={1401.500} y={559.8} $size={9.4} $track={-0.12}>Bootcamp ORGA Technik</PlanText>

      {SINGLES.map((s) => (
        <g key={s.label}>
          <Chair x={s.chair} y={s.y - 12.3} tone="green" />
          <Desk x={s.x} y={s.y} w={27.5} h={22} tone="green" lines={[s.label]} />
        </g>
      ))}

      {BLOCKS.map((b) => (
        <g key={b.letter + b.first}>
          {b.top.map((x) => <Chair key={`t${x}`} x={x} y={b.topY} tone={b.tone} />)}
          {[0, 1].map((r) =>
            b.xs.map((x, i) => {
              const row = pad(b.first + r);
              const label = b.letter === "C" && row === "10" && b.seats[i] === "14" ? "C10-14" : `${b.letter}-${row}-${b.seats[i]}`;
              return <Desk key={`${r}-${i}`} x={x} y={b.y + r * b.gap} w={b.w} h={24.5} tone={b.tone} lines={[label]} />;
            }),
          )}
          {b.bottom.map((x) => <Chair key={`b${x}`} x={x} y={b.bottomY} tone={b.tone} turn={180} />)}
        </g>
      ))}

      <Desk x={1300} y={495.500} w={24} h={55} tone="red" lines={["Orga-01"]} turn={-90} />
      <Desk x={1369} y={495.500} w={24} h={55} tone="red" lines={["Orga-02"]} turn={-90} />
      <Desk x={1396.300} y={495.500} w={24} h={55} tone="red" lines={["Orga-03"]} turn={-90} />
      <Desk x={1467.300} y={495.500} w={24.500} h={55} tone="red" lines={["Orga-04"]} turn={-90} />
      <Chair x={1335.700} y={522.700} tone="red" turn={90} />
      <Chair x={1357} y={522.700} tone="red" turn={-90} />
      <Chair x={1432.500} y={522.700} tone="red" turn={90} />
      <Chair x={1454} y={522.700} tone="red" turn={-90} />
      <Desk x={1299.700} y={551.500} w={24} h={45.500} tone="yellow" lines={["VideoCase"]} turn={-90} />
      <Chair x={1335.700} y={574.500} tone="yellow" turn={90} />
      <Desk x={1299.700} y={598.500} w={45} h={24} tone="yellow" lines={["AudioCase", "VideoTisch"]} />
      <Desk x={1347.700} y={598.500} w={24.500} h={24} tone="yellow" lines={["Licht", "Pult"]} />
      <Desk x={1375} y={598.500} w={54.300} h={24.500} tone="navy" lines={["Sound"]} />
      <Desk x={1432.500} y={598.500} w={54.300} h={24.500} tone="navy" lines={["Spare"]} />

      <rect x="1362.500" y="629" width="120.500" height="241" rx="2" fill="#ffcc5c" stroke="#c79a3c" />
      <circle cx="1477" cy="634.500" r="1.200" fill="#222" />
      <PlanText x={1422.500} y={745.5} $size={12} $bold $fill="#222">Hauptbühne</PlanText>
      <PlanText x={1422.500} y={760.5} $size={12} $bold $fill="#222">8m x 4m</PlanText>

      <rect x="380" y="1130.500" width="31" height="32" fill="#fdc000" stroke="#b88a00" />
      <path d="M390 1135h17.500v24" fill="none" stroke="#b88a00" />
      <PlanText $mono $size={7} $fill="#4c3a00" transform="translate(397 1149) rotate(-90)" x={0} y={2.5}>5A/B</PlanText>
      {[430.5, 460, 492.7, 522.5, 561.3, 591, 629.500, 659.300, 853, 920, 987.500, 1250.500, 1317.500].map((x) => (
        <Chair key={x} x={x} y={1145.300} tone="amber" scale={1.2} />
      ))}

      <g transform="translate(800 859)" fill="#fff" stroke="#8d8d8d" strokeWidth="1">
        {[0, 90, 180, 270].map((a) => (
          <path key={a} transform={`rotate(${a})`} d="M0-10L4-5.500H1.500V-2.500h-3v-3H-4z" />
        ))}
        <circle r="2.200" />
      </g>
    </svg>
  );
}

/* ---------- data ---------- */

type Channel = { name: string; tone?: "plain" | "link"; mark?: "tag" | "video"; selected?: boolean };
type Team = { name: string; avatar: "blue" | "cat" | "b24"; channels: Channel[] };

const seeAll: Channel = { name: "See all channels", tone: "link" };

const TEAMS: Team[] = [
  {
    name: "GK Tech Community",
    avatar: "blue",
    channels: [
      { name: "General" },
      { name: "Community Orga" },
      { name: "Development" },
      { name: "Identity", mark: "tag" },
      { name: "Modern Collab and Compliance" },
      { name: "MS Certificates and Specializations" },
      { name: "Privileged Administration" },
      { name: "Security" },
      { name: "Transition" },
      seeAll,
    ],
  },
  { name: "GK CSOC", avatar: "cat", channels: [{ name: "General" }, { name: "Orga" }, { name: "PAW Topics" }, seeAll] },
  {
    name: "GK Bootcamp",
    avatar: "b24",
    channels: [{ name: "General", tone: "plain", selected: true }, { name: "Entertainment" }, { name: "Orga Questions", tone: "plain" }],
  },
  {
    name: "GK Products",
    avatar: "blue",
    channels: [
      { name: "General" },
      { name: "RADIUSaaS", mark: "tag" },
      { name: "Research", tone: "plain" },
      { name: "SCEPman", mark: "video" },
      { name: "Unified Contacts" },
      { name: "Website Incidents" },
      seeAll,
    ],
  },
  {
    name: "GK Products DevOps",
    avatar: "blue",
    channels: [
      { name: "General" },
      { name: "Gitlab" },
      { name: "license_server" },
      { name: "raas_ops" },
      { name: "rm_ServerModule test", tone: "plain" },
      { name: "scepman_support" },
      seeAll,
    ],
  },
  { name: "GK Trainings", avatar: "blue", channels: [{ name: "General", tone: "plain" }, { name: "Teams Voice Training" }] },
  { name: "", avatar: "blue", channels: [] },
];

const MENU: [string, number][] = [
  ["File", 39], ["Home", 53], ["Insert", 51], ["Share", 51], ["Page Layout", 87], ["Formulas", 69.5],
  ["Data", 45.5], ["Review", 58], ["View", 46], ["Automate", 74], ["Help", 46], ["Draw", 40],
];

const ic = { size: 17, strokeWidth: 1.6 };

const RAIL: { label: string; icon: React.ReactNode; badge?: string; active?: boolean }[] = [
  { label: "Activity", icon: <Bell {...ic} />, badge: "4" },
  { label: "Chat", icon: <ChatGlyph />, badge: "1" },
  { label: "Teams", icon: <TeamsGlyph />, active: true },
  { label: "Calendar", icon: <CalendarDays {...ic} /> },
  { label: "Calls", icon: <Phone {...ic} /> },
  { label: "OneDrive", icon: <Cloud {...ic} /> },
  { label: "Contacts", icon: <ContactsGlyph /> },
  { label: "The Book...", icon: <BookGlyph /> },
  { label: "LAB Co...", icon: <House {...ic} /> },
  { label: "", icon: <Ellipsis size={18} /> },
  { label: "Apps", icon: <SquarePlus {...ic} size={18} /> },
];

/* ---------- ribbon ---------- */

function RibbonBar() {
  return (
    <Ribbon>
      <Group $w={39}>
        <GroupBody>
          <Stack $w={38} $gap={15} $pad="13px 0 0" $center>
            <Undo2 size={12} color="#b5b5b5" />
            <Redo2 size={12} color="#b5b5b5" />
          </Stack>
        </GroupBody>
        <GroupLabel $dim $side={0}><i /><span>Undo</span><i /></GroupLabel>
      </Group>

      <Group $w={148}>
        <GroupBody>
          <BigButton $w={48} $top={6}>
            <PasteIcon />
            Paste
            <Chev />
          </BigButton>
          <Stack $pad="0 0 0 2px">
            <Command><CutIcon />Cut</Command>
            <Command><CopyIcon />Copy</Command>
            <Command $h={22}><PainterIcon />Format Painter</Command>
          </Stack>
        </GroupBody>
        <GroupLabel><i /><span>Clipboard</span></GroupLabel>
      </Group>

      <Group $w={233}>
        <GroupBody $pad="8px 0 0 6px">
          <Stack>
            <Command $h={21}>
              <GroupBody>
                <Combo $w={112} $side="left">Calibri (Body)<Chev /></Combo>
                <Combo $w={46} $side="right">11<Chev /></Combo>
              </GroupBody>
              <GroupBody $gap={9} $pad="0 0 0 2px">
                <SizeGlyph $size={13}>A<SizeMark /></SizeGlyph>
                <SizeGlyph $size={11.5}>A<SizeMark down /></SizeGlyph>
              </GroupBody>
            </Command>
            <Cells $cols="24px 24px 24px 24px 24px 22px 12px 20px 14px 20px 12px" $h={32}>
              <Glyph $bold>B</Glyph>
              <Glyph $italic $size={15}>I</Glyph>
              <Glyph $deco="underline">U</Glyph>
              <Glyph $deco="underline double">D</Glyph>
              <Glyph $deco="line-through" $size={12}>ab</Glyph>
              <BorderIcon />
              <Chev />
              <BucketIcon />
              <Chev />
              <Underbar $color="#f00000">A</Underbar>
              <Chev />
            </Cells>
          </Stack>
        </GroupBody>
        <GroupLabel><i /><span>Font</span></GroupLabel>
      </Group>

      <Group $w={214}>
        <GroupBody $pad="0 0 0 6px">
          <Stack $w={85}>
            <Cells $cols="24px 24px 24px" $h={23}>
              <VAlign at={2} />
              <VAlign at={5} />
              <Pressed><VAlign at={9} /></Pressed>
            </Cells>
            <Cells $cols="24px 24px 24px" $h={21}>
              <HAlign xs={[[0, 11], [0, 6], [0, 9]]} />
              <HAlign xs={[[1, 11], [3, 9], [2, 10]]} />
              <HAlign xs={[[1, 12], [6, 12], [3, 12]]} />
            </Cells>
            <Cells $cols="24px 24px 24px 10px" $h={25}>
              <IndentIcon />
              <IndentIcon flip />
              <OrientIcon />
              <Chev />
            </Cells>
          </Stack>
          <Stack $pad="6px 0 0 9px">
            <Command $h={26}><WrapIcon />Wrap Text</Command>
            <Command $h={26}><MergeIcon />Merge &amp; Center<Chev /></Command>
          </Stack>
        </GroupBody>
        <GroupLabel><i /><span>Alignment</span><Launcher /></GroupLabel>
      </Group>

      <Group $w={143}>
        <GroupBody $pad="8px 0 0 6px">
          <Stack>
            <Combo $w={111}>General<Chev /></Combo>
            <Cells $cols="24px 10px 24px 24px 25px 24px" $h={32}>
              <Glyph $size={11.5}>$€</Glyph>
              <Chev />
              <Glyph $size={13}>%</Glyph>
              <CommaIcon />
              <DecimalIcon more />
              <DecimalIcon />
            </Cells>
          </Stack>
        </GroupBody>
        <GroupLabel><i /><span>Number</span><Launcher /></GroupLabel>
      </Group>

      <Group $w={165}>
        <GroupBody $pad="0 0 0 7px">
          <BigButton $w={62}><CondIcon /><Line>Conditional</Line><Line>Formatting<Chev /></Line></BigButton>
          <BigButton $w={50}><TableIcon /><Line>Format As</Line><Line>Table<Chev /></Line></BigButton>
          <BigButton $w={38}><TableIcon cells /><Line>Cell</Line><Line>Styles<Chev /></Line></BigButton>
        </GroupBody>
        <GroupLabel><i /><span>Styles</span></GroupLabel>
      </Group>

      <Group $w={121}>
        <GroupBody $pad="0 0 0 6px">
          <BigButton $w={35}><CellIcon kind="insert" /><Line>Insert</Line><Line><Chev /></Line></BigButton>
          <BigButton $w={36}><CellIcon kind="delete" /><Line>Delete</Line><Line><Chev /></Line></BigButton>
          <BigButton $w={36}><CellIcon kind="format" /><Line>Format</Line><Line><Chev /></Line></BigButton>
        </GroupBody>
        <GroupLabel><i /><span>Cells</span></GroupLabel>
      </Group>

      <Group $w={172}>
        <GroupBody $pad="0 0 0 12px">
          <Stack $w={75} $pad="1px 0 0">
            <Command><SigmaIcon />AutoSum<Chev /></Command>
            <Command $h={22}><EraserIcon />Clear<Chev /></Command>
          </Stack>
          <BigButton $w={38}><SortIcon /><Line>Sort &amp;</Line><Line>Filter<Chev /></Line></BigButton>
          <BigButton $w={38}><Search size={19} strokeWidth={1.5} color="#666" /><Line>Find &amp;</Line><Line>Select<Chev /></Line></BigButton>
        </GroupBody>
        <GroupLabel><i /><span>Editing</span></GroupLabel>
      </Group>

      <Group $w={64}>
        <GroupBody>
          <BigButton $w={62}><SensIcon /><Line>Sensitivity</Line><Line><Chev /></Line></BigButton>
        </GroupBody>
        <GroupLabel $side={0}><i /><span>Sensitivity</span><i /></GroupLabel>
      </Group>
    </Ribbon>
  );
}

/* ---------- page ---------- */

export default function App() {
  return (
    <Shell>
      <GlobalStyle />
      <TitleBar>
        <LogoSlot><TeamsLogo /></LogoSlot>
        <Tap>TAP</Tap>
        <NavButtons>
          <ChevronLeft size={18} strokeWidth={1.4} color="#555" />
          <ChevronRight size={18} strokeWidth={1.4} color="#c4c4c4" />
        </NavButtons>
        <GlobalSearch><Search size={14} strokeWidth={1.5} />Search</GlobalSearch>
      </TitleBar>
      <Banner>
        <BannerDot />
        Your status is set to do not disturb. You'll only get notifications for urgent messages and from your priority contacts.
      </Banner>
      <Body>
        <Rail>
          {RAIL.map((r, i) => (
            <RailItem key={i} $active={r.active} $bare={!r.label}>
              {r.icon}
              {r.label}
              {r.badge && <Badge>{r.badge}</Badge>}
            </RailItem>
          ))}
        </Rail>

        <Sidebar>
          <SideHeader>
            <SideTitle>Teams</SideTitle>
            <Ellipsis size={16} strokeWidth={1.6} />
            <ListFilter size={15} strokeWidth={1.4} />
            <Plus size={17} strokeWidth={1.4} />
          </SideHeader>
          <Discover><Sparkle />Discover</Discover>
          <TeamList>
            <TeamListInner>
              <ChannelRow $tone="bold">FAQ</ChannelRow>
              <ChannelRow $tone="bold">People and Culture</ChannelRow>
              {TEAMS.map((t, i) => (
                <React.Fragment key={i}>
                  <TeamRow>
                    <Caret />
                    <Avatar $kind={t.avatar}>
                      {t.avatar === "b24" && <B24 size={25} />}
                      {t.avatar === "cat" && <Cat />}
                    </Avatar>
                    {t.name}
                  </TeamRow>
                  {t.channels.map((c) => (
                    <ChannelRow key={c.name} $tone={c.tone ?? "bold"} $selected={c.selected}>
                      {c.name}
                      {c.mark === "tag" && <PriorityTag />}
                      {c.mark === "video" && <Video size={11} fill="#5155b5" color="#5155b5" style={{ marginRight: -2 }} />}
                    </ChannelRow>
                  ))}
                </React.Fragment>
              ))}
            </TeamListInner>
          </TeamList>
        </Sidebar>

        <Main>
          <ChannelHeader>
            <B24 size={28} />
            <ChannelTitle>General</ChannelTitle>
            <HeaderTab $w={43.5}>Posts</HeaderTab>
            <HeaderTab $w={38.5}>Files</HeaderTab>
            <HeaderTab $w={51}>Videos</HeaderTab>
            <HeaderTab $w={96} $active>Seatingmap<ChevronDown size={12} strokeWidth={1.5} /></HeaderTab>
            <SquarePlus size={15} strokeWidth={1.4} color="#555" />
          </ChannelHeader>

          <FileRow>
            <ExcelLogo />
            <FileName>2024-gk-bootcampSeatingmap</FileName>
            <CloudSaved />
            <ChevronDown size={11} strokeWidth={1.6} style={{ marginLeft: 5 }} />
            <ExcelSearch><Search size={14} strokeWidth={1.4} style={{ transform: "scaleX(-1)" }} />Search Excel</ExcelSearch>
          </FileRow>

          <MenuTabs>
            {MENU.map(([name, w]) => (
              <MenuTab key={name} $w={w} $active={name === "Home"}><span>{name}</span></MenuTab>
            ))}
          </MenuTabs>

          <RibbonBar />

          <FormulaRow>
            <FormulaBox $w={107} $spread>AF17<Chev /></FormulaBox>
            <FormulaBox $w={77}>
              <X size={15} strokeWidth={1.2} color="#b0b0b0" />
              <Check size={15} strokeWidth={1.2} color="#b0b0b0" />
              <Glyph $italic $size={13}>fx</Glyph>
            </FormulaBox>
            <FormulaBox />
          </FormulaRow>

          <SheetArea>
            <Corner><Triangle /></Corner>
            <ColumnHeads>
              {"CDEFGHIJKLMNOPQRSTUVWXYZ".split("").map((c) => <ColumnHead key={c}>{c}</ColumnHead>)}
            </ColumnHeads>
            <RowHeads>
              {Array.from({ length: 47 }, (_, i) => <RowHead key={i} $on={i === 16}>{i + 1}</RowHead>)}
            </RowHeads>
            <Canvas><FloorPlan /></Canvas>
          </SheetArea>

          <ScrollRow><ScrollArrow /><ScrollThumb /></ScrollRow>
          <SheetTabs>
            <ChevronLeft size={15} strokeWidth={1.5} color="#c0c0c0" />
            <ChevronRight size={15} strokeWidth={1.5} color="#c0c0c0" style={{ margin: "0 12px 0 13px" }} />
            <Menu size={15} strokeWidth={1.5} style={{ marginRight: 15 }} />
            <SheetTab $active $w={24}>Plan</SheetTab>
            <SheetTab $w={148} style={{ marginLeft: 21 }}>Hier Sitzplatz eintragen!</SheetTab>
            <Plus size={16} strokeWidth={1.4} />
          </SheetTabs>
          <Status>
            <Book size={11} strokeWidth={1.8} />
            <StatusItem $w={51}>Business</StatusItem>
            <StatusItem $w={120}>Workbook Statistics</StatusItem>
          </Status>
        </Main>
      </Body>
    </Shell>
  );
}
